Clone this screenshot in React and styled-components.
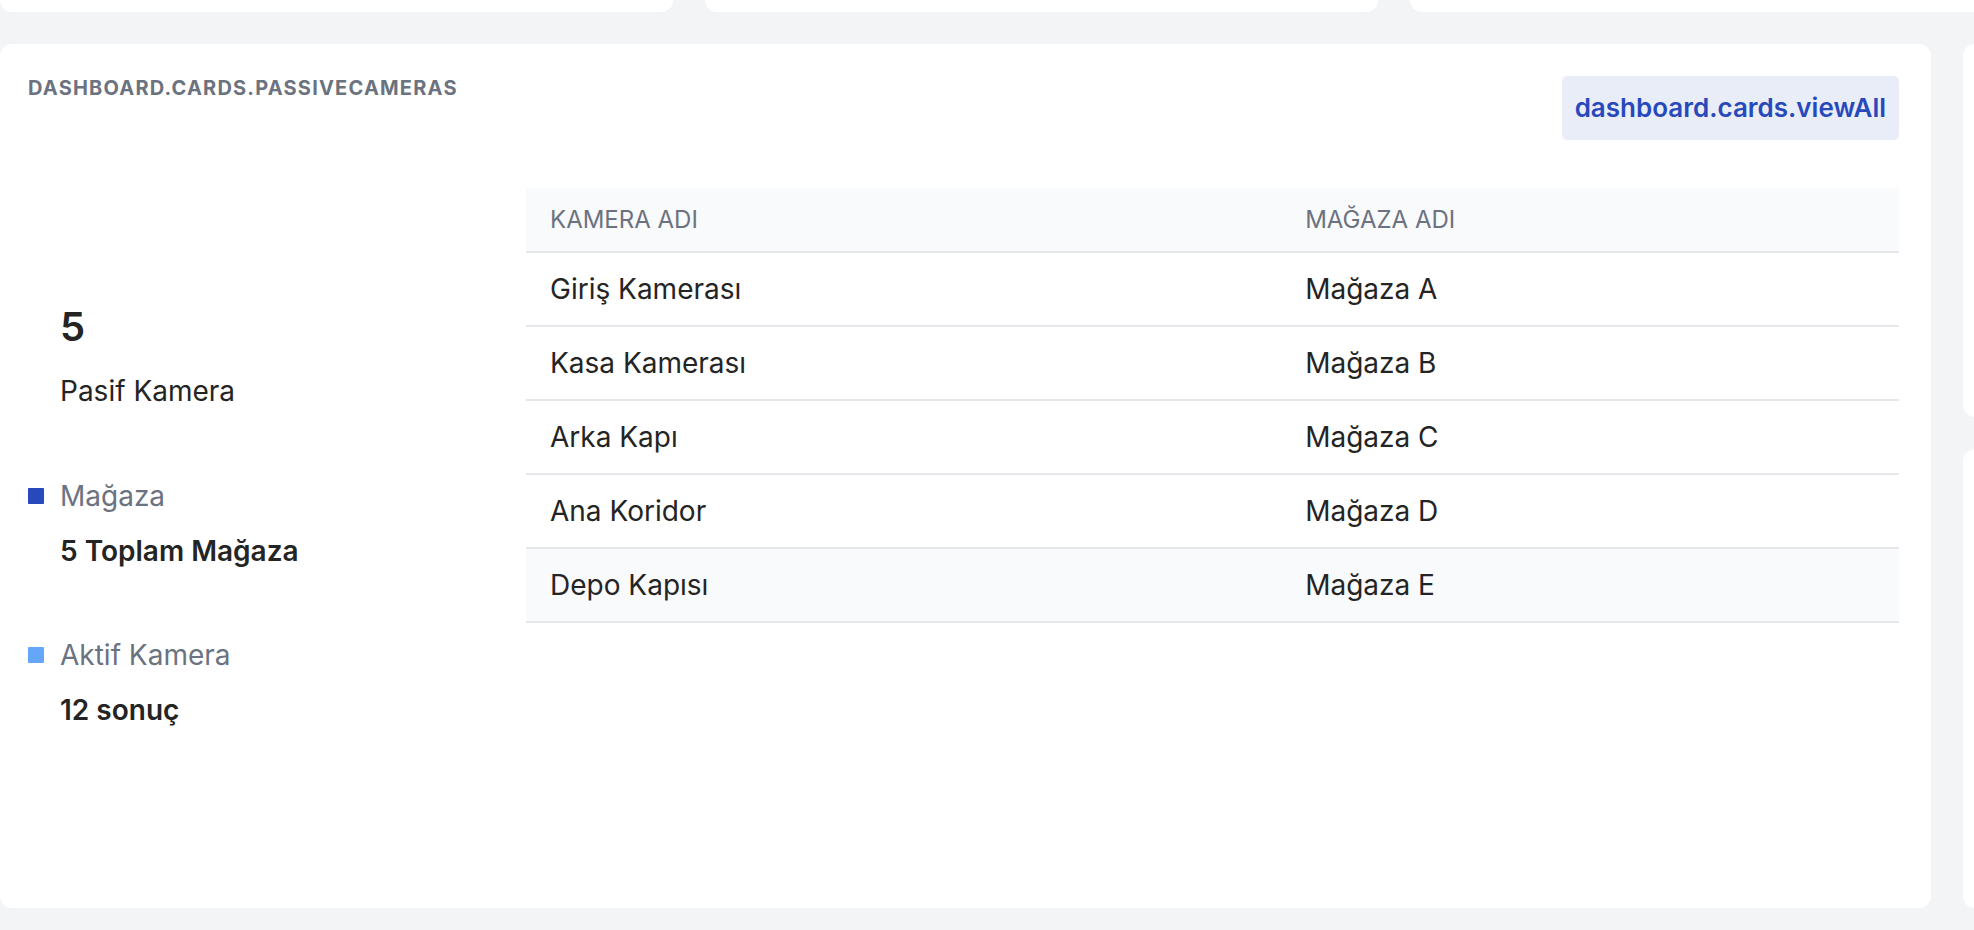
import styled, { createGlobalStyle } from "styled-components";

const cameras = [
  { name: "Giriş Kamerası", store: "Mağaza A" },
  { name: "Kasa Kamerası", store: "Mağaza B" },
  { name: "Arka Kapı", store: "Mağaza C" },
  { name: "Ana Koridor", store: "Mağaza D" },
  { name: "Depo Kapısı", store: "Mağaza E", hovered: true },
];

const legend = [
  { color: "#2849bb", label: "Mağaza", value: "5 Toplam Mağaza" },
  { color: "#64a6f8", label: "Aktif Kamera", value: "12 sonuç" },
];

const App = () => {
  return (
    <>
      <GlobalStyle />
      <Page>
        <TopRow>
          <StubCard />
          <StubCard />
          <StubCard />
        </TopRow>

        <MainRow>
          <Card>
            <CardHeader>
              <CardTitle>dashboard.cards.passiveCameras</CardTitle>
              <ViewAllButton>dashboard.cards.viewAll</ViewAllButton>
            </CardHeader>

            <CardBody>
              <Summary>
                <Total>
                  <TotalNumber>5</TotalNumber>
                  <TotalLabel>Pasif Kamera</TotalLabel>
                </Total>

                <Legend>
                  {legend.map((item) => (
                    <LegendItem key={item.label}>
                      <LegendRow>
                        <Swatch $color={item.color} />
                        <LegendLabel>{item.label}</LegendLabel>
                      </LegendRow>
                      <LegendValue>{item.value}</LegendValue>
                    </LegendItem>
                  ))}
                </Legend>
              </Summary>

              <TableWrap>
                <Table>
                  <thead>
                    <tr>
                      <Th $width="55%">Kamera Adı</Th>
                      <Th>Mağaza Adı</Th>
                    </tr>
                  </thead>
                  <tbody>
                    {cameras.map((cam) => (
                      <Tr key={cam.name} $hovered={cam.hovered}>
                        <Td>{cam.name}</Td>
                        <Td>{cam.store}</Td>
                      </Tr>
                    ))}
                  </tbody>
                </Table>
              </TableWrap>
            </CardBody>
          </Card>

          <SideColumn>
            <SideCard $height="373px" />
            <SideCard $grow />
          </SideColumn>
        </MainRow>
      </Page>
    </>
  );
};

export default App;

// styles
const GlobalStyle = createGlobalStyle`
  html, body {
    margin: 0;
    padding: 0;
    background: #f3f4f6;
    overflow: hidden;
  }

  body {
    font-family: Inter, "Noto Sans", "Liberation Sans", sans-serif;
    color: #242424;
  }

  * {
    box-sizing: border-box;
  }
`;

const Page = styled.div`
  width: 2400px;
  height: 930px;
  display: flex;
  flex-direction: column;
  gap: 32px;
`;

const TopRow = styled.div`
  display: grid;
  grid-template-columns: 673px 673px 673px;
  gap: 32px;
`;

const StubCard = styled.div`
  height: 12px;
  background: #ffffff;
  border-radius: 0 0 12px 12px;
`;

const MainRow = styled.div`
  display: grid;
  grid-template-columns: 1931px 400px;
  gap: 32px;
  height: 864px;
`;

const Card = styled.section`
  background: #ffffff;
  border-radius: 12px;
  padding: 32px 32px 32px 28px;
  display: flex;
  flex-direction: column;
  gap: 48px;
`;

const CardHeader = styled.div`
  display: flex;
  justify-content: space-between;
  align-items: flex-start;
`;

const CardTitle = styled.h3`
  margin: 0;
  font-size: 20px;
  line-height: 24px;
  font-weight: 700;
  letter-spacing: 1.2px;
  text-transform: uppercase;
  color: #6b7280;
`;

const ViewAllButton = styled.button`
  height: 64px;
  padding: 0 13px;
  border: none;
  border-radius: 5px;
  background: #e8edf8;
  color: #2849bb;
  font-family: inherit;
  font-size: 26px;
  font-weight: 600;
  line-height: 64px;
  cursor: pointer;
`;

const CardBody = styled.div`
  display: flex;
  gap: 48px;
`;

const Summary = styled.div`
  width: 450px;
  flex-shrink: 0;
  padding-top: 115px;
  display: flex;
  flex-direction: column;
  gap: 65px;
`;

const Total = styled.div`
  padding-left: 32px;
  display: flex;
  flex-direction: column;
  gap: 20px;
`;

const TotalNumber = styled.div`
  font-size: 40px;
  line-height: 48px;
  font-weight: 600;
`;

const TotalLabel = styled.div`
  font-size: 28px;
  line-height: 40px;
`;

const Legend = styled.div`
  display: flex;
  flex-direction: column;
  gap: 64px;
`;

const LegendItem = styled.div`
  display: flex;
  flex-direction: column;
  gap: 15px;
`;

const LegendRow = styled.div`
  display: flex;
  align-items: center;
  gap: 16px;
`;

const Swatch = styled.span`
  width: 16px;
  height: 16px;
  border-radius: 1px;
  background: ${(p) => p.$color};
`;

const LegendLabel = styled.span`
  font-size: 28px;
  line-height: 40px;
  color: #6b7280;
`;

const LegendValue = styled.div`
  padding-left: 32px;
  font-size: 28px;
  line-height: 40px;
  font-weight: 600;
`;

const TableWrap = styled.div`
  flex: 1;
`;

const Table = styled.table`
  width: 100%;
  border-collapse: collapse;
`;

const Th = styled.th`
  width: ${(p) => p.$width || "auto"};
  padding: 16px 24px 15px;
  background: #f9fafb;
  border-bottom: 2px solid #e5e7eb;
  text-align: left;
  font-size: 24px;
  line-height: 32px;
  font-weight: 400;
  text-transform: uppercase;
  color: #6b7280;
`;

const Tr = styled.tr`
  background: ${(p) => (p.$hovered ? "#f9fafb" : "#ffffff")};
`;

const Td = styled.td`
  padding: 16px 24px;
  border-bottom: 2px solid #e5e7eb;
  font-size: 28px;
  line-height: 40px;
`;

const SideColumn = styled.div`
  display: flex;
  flex-direction: column;
  gap: 32px;
`;

const SideCard = styled.div`
  background: #ffffff;
  border-radius: 12px;
  height: ${(p) => p.$height || "auto"};
  flex: ${(p) => (p.$grow ? 1 : "none")};
`;
